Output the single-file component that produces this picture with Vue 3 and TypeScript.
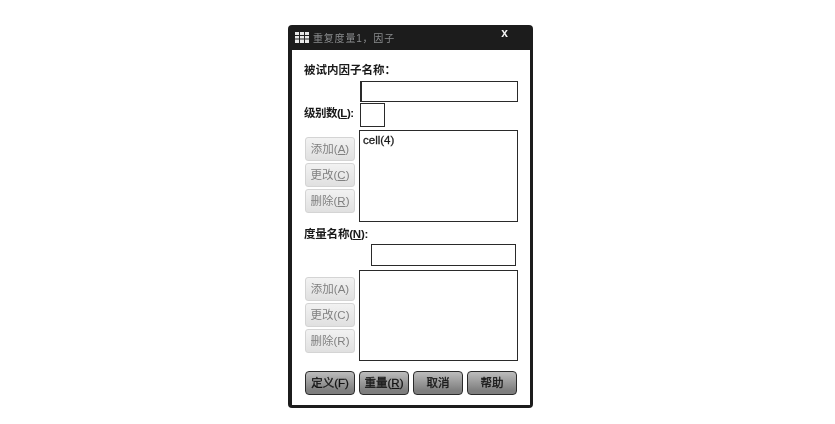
<script setup lang="ts">
const sideA: { t: string; k: string }[] = [
  { t: '添加(', k: 'A' },
  { t: '更改(', k: 'C' },
  { t: '删除(', k: 'R' },
]
const bottom: { t: string; k?: string }[] = [
  { t: '定义(F)' },
  { t: '重量(', k: 'R' },
  { t: '取消' },
  { t: '帮助' },
]
</script>

<template>
  <div class="page">
    <div class="win">
      <div class="title">
        <svg class="grid-icon" width="14" height="11" viewBox="0 0 14 11">
          <path d="M0 0h14v11H0z" fill="#e8e8e8" />
          <path d="M0 3.5h14M0 7h14M4.5 0v11M9.5 0v11" stroke="#222" stroke-width="1" />
        </svg>
        <span class="title-text">重复度量1，因子</span>
        <span class="close">x</span>
      </div>
      <div class="body">
        <div class="label first">被试内因子名称：</div>
        <div class="field f1"></div>
        <div class="level">
          <span class="label lv">级别数(<u>L</u>):</span>
          <div class="field f2"></div>
        </div>
        <div class="row r1">
          <div class="side">
            <div v-for="b in sideA" :key="b.t" class="sbtn">{{ b.t }}<u>{{ b.k }}</u>)</div>
          </div>
          <div class="list l1"><span>cell(4)</span></div>
        </div>
        <div class="label second">度量名称(<u>N</u>):</div>
        <div class="field f3"></div>
        <div class="row r2">
          <div class="side">
            <div v-for="b in sideA" :key="b.t" class="sbtn">{{ b.t }}{{ b.k }})</div>
          </div>
          <div class="list l2"></div>
        </div>
        <div class="foot">
          <div v-for="b in bottom" :key="b.t" class="fbtn">
            {{ b.t }}<template v-if="b.k"><u>{{ b.k }}</u>)</template>
          </div>
        </div>
      </div>
    </div>
  </div>
</template>

<style>
html, body { margin: 0; background: #fff; }
</style>

<style scoped>
.page {
  width: 835px;
  height: 424px;
  box-sizing: border-box;
  padding: 25px 0 0 288px;
  background: #fff;
  font-family: "Liberation Sans", "Noto Sans CJK SC", sans-serif;
  overflow: hidden;
}
.win {
  width: 245px;
  height: 383px;
  box-sizing: border-box;
  background: #1c1c1c;
  border-radius: 4px;
  padding: 0 3px 3px 4px;
  display: flex;
  flex-direction: column;
  filter: blur(0.55px);
}
.title {
  height: 25px;
  flex: none;
  display: flex;
  align-items: center;
  color: #8a8c8e;
  font-size: 10px;
  padding-left: 3px;
}
.grid-icon { flex: none; margin-right: 4px; }
.title-text { letter-spacing: 0.8px; }
.close {
  margin-left: auto;
  margin-right: 22px;
  margin-top: -9px;
  color: #f2f2f2;
  font-size: 12px;
  font-weight: 700;
}
.body {
  flex: 1;
  background: #fff;
  padding-left: 12px;
  display: flex;
  flex-direction: column;
  align-items: flex-start;
  color: #222;
}
.label { font-size: 11.5px; font-weight: 700; line-height: 14px; color: #1a1a1a; }
.first { margin-top: 13px; }
.field { border: 1px solid #2a2a2a; box-sizing: border-box; background: #fff; }
.f1 { width: 158px; height: 21px; margin: 4px 0 0 56px; border-left-width: 2px; }
.level { display: flex; align-items: center; margin-top: 1px; }
.lv { width: 56px; flex: none; letter-spacing: -0.5px; white-space: nowrap; margin-top: -4px; }
.f2 { width: 25px; height: 24px; }
.row { display: flex; margin-top: 3px; }
.side {
  width: 50px;
  margin: 7px 4px 0 1px;
  display: flex;
  flex-direction: column;
  gap: 2px;
}
.sbtn {
  height: 24px;
  box-sizing: border-box;
  border: 1px solid #d4d4d4;
  border-radius: 3px;
  background: linear-gradient(#f2f2f2, #e0e0e0);
  color: #808080;
  font-size: 11.5px;
  line-height: 22px;
  text-align: center;
  white-space: nowrap;
}
.list { width: 159px; height: 92px; box-sizing: border-box; border: 1px solid #2a2a2a; background: #fff; }
.l1 span { display: block; font-size: 11.5px; color: #1a1a1a; padding: 3px 0 0 3px; line-height: 13px; -webkit-text-stroke: 0.3px #1a1a1a; }
.second { margin-top: 5px; letter-spacing: -0.2px; }
.f3 { width: 145px; height: 22px; margin: 3px 0 0 67px; }
.r2 { margin-top: 4px; }
.r2 .list { height: 91px; }
.foot { display: flex; margin: 10px 0 0 1px; gap: 4px; }
.fbtn {
  width: 50px;
  height: 24px;
  box-sizing: border-box;
  border: 1px solid #2a2a2a;
  border-radius: 4px;
  background: linear-gradient(#bcbcbc, #7e7e7e 85%);
  color: #141414;
  font-size: 11.5px;
  line-height: 22px;
  text-align: center;
  white-space: nowrap;
  -webkit-text-stroke: 0.3px #141414;
}
</style>
